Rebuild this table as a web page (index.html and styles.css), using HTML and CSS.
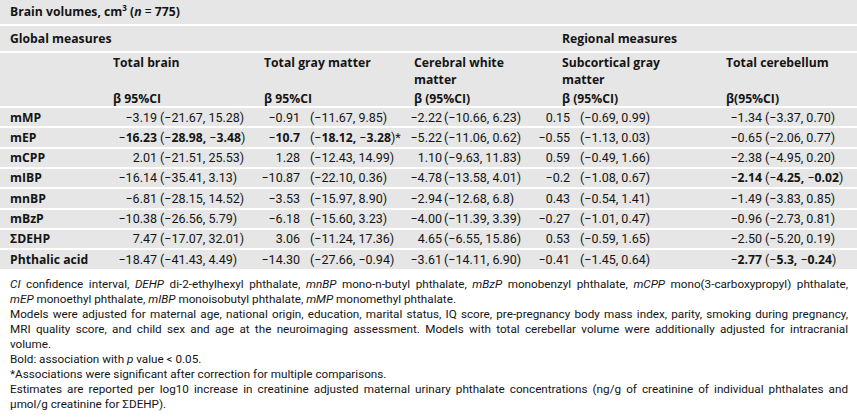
FILE: index.html
```html
<!DOCTYPE html>
<html lang="en">
<head>
<meta charset="utf-8">
<title>Brain volumes</title>
<link rel="stylesheet" href="styles.css">
</head>
<body>
<div class="tbl">
  <div class="row title">Brain volumes, cm<sup class="sup">3</sup> (<i>n</i> <span class="eq">=</span> 775)</div>
  <div class="row groups">
    <div class="gcell">Global measures</div>
    <div class="gcell reg">Regional measures</div>
  </div>
  <div class="row head">
    <div class="hcell"></div>
    <div class="hcell"><div class="hn">Total brain</div><div class="hb">β 95%CI</div></div>
    <div class="hcell"><div class="hn">Total gray matter</div><div class="hb">β 95%CI</div></div>
    <div class="hcell"><div class="hn">Cerebral white<br>matter</div><div class="hb">β (95%CI)</div></div>
    <div class="hcell"><div class="hn">Subcortical gray<br>matter</div><div class="hb">β (95%CI)</div></div>
    <div class="hcell"><div class="hn">Total cerebellum</div><div class="hb">β(95%CI)</div></div>
  </div>

  <div class="row data">
    <div class="lab">mMP</div>
    <div class="est">−3.19</div><div class="ci c1">(−21.67, 15.28)</div>
    <div class="est">−0.91</div><div class="ci c2">(−11.67, 9.85)</div>
    <div class="est">−2.22</div><div class="ci c3">(−10.66, 6.23)</div>
    <div class="est">0.15</div><div class="ci c4">(−0.69, 0.99)</div>
    <div class="est">−1.34</div><div class="ci c5">(−3.37, 0.70)</div>
  </div>
  <div class="row data">
    <div class="lab">mEP</div>
    <div class="est">−<b>16.23</b></div><div class="ci c1">(−<b>28.98,</b> −<b>3.48</b>)</div>
    <div class="est">−<b>10.7</b></div><div class="ci c2">(−<b>18.12,</b> −<b>3.28</b>)*</div>
    <div class="est">−5.22</div><div class="ci c3">(−11.06, 0.62)</div>
    <div class="est">−0.55</div><div class="ci c4">(−1.13, 0.03)</div>
    <div class="est">−0.65</div><div class="ci c5">(−2.06, 0.77)</div>
  </div>
  <div class="row data">
    <div class="lab">mCPP</div>
    <div class="est">2.01</div><div class="ci c1">(−21.51, 25.53)</div>
    <div class="est">1.28</div><div class="ci c2">(−12.43, 14.99)</div>
    <div class="est">1.10</div><div class="ci c3">(−9.63, 11.83)</div>
    <div class="est">0.59</div><div class="ci c4">(−0.49, 1.66)</div>
    <div class="est">−2.38</div><div class="ci c5">(−4.95, 0.20)</div>
  </div>
  <div class="row data">
    <div class="lab">mIBP</div>
    <div class="est">−16.14</div><div class="ci c1">(−35.41, 3.13)</div>
    <div class="est">−10.87</div><div class="ci c2">(−22.10, 0.36)</div>
    <div class="est">−4.78</div><div class="ci c3">(−13.58, 4.01)</div>
    <div class="est">−0.2</div><div class="ci c4">(−1.08, 0.67)</div>
    <div class="est">−<b>2.14</b></div><div class="ci c5">(−<b>4.25,</b> −<b>0.02</b>)</div>
  </div>
  <div class="row data">
    <div class="lab">mnBP</div>
    <div class="est">−6.81</div><div class="ci c1">(−28.15, 14.52)</div>
    <div class="est">−3.53</div><div class="ci c2">(−15.97, 8.90)</div>
    <div class="est">−2.94</div><div class="ci c3">(−12.68, 6.8)</div>
    <div class="est">0.43</div><div class="ci c4">(−0.54, 1.41)</div>
    <div class="est">−1.49</div><div class="ci c5">(−3.83, 0.85)</div>
  </div>
  <div class="row data">
    <div class="lab">mBzP</div>
    <div class="est">−10.38</div><div class="ci c1">(−26.56, 5.79)</div>
    <div class="est">−6.18</div><div class="ci c2">(−15.60, 3.23)</div>
    <div class="est">−4.00</div><div class="ci c3">(−11.39, 3.39)</div>
    <div class="est">−0.27</div><div class="ci c4">(−1.01, 0.47)</div>
    <div class="est">−0.96</div><div class="ci c5">(−2.73, 0.81)</div>
  </div>
  <div class="row data">
    <div class="lab">ΣDEHP</div>
    <div class="est">7.47</div><div class="ci c1">(−17.07, 32.01)</div>
    <div class="est">3.06</div><div class="ci c2">(−11.24, 17.36)</div>
    <div class="est">4.65</div><div class="ci c3">(−6.55, 15.86)</div>
    <div class="est">0.53</div><div class="ci c4">(−0.59, 1.65)</div>
    <div class="est">−2.50</div><div class="ci c5">(−5.20, 0.19)</div>
  </div>
  <div class="row data">
    <div class="lab">Phthalic acid</div>
    <div class="est">−18.47</div><div class="ci c1">(−41.43, 4.49)</div>
    <div class="est">−14.30</div><div class="ci c2">(−27.66, −0.94)</div>
    <div class="est">−3.61</div><div class="ci c3">(−14.11, 6.90)</div>
    <div class="est">−0.41</div><div class="ci c4">(−1.45, 0.64)</div>
    <div class="est">−<b>2.77</b></div><div class="ci c5">(−<b>5.3,</b> −<b>0.24</b>)</div>
  </div>
</div>

<div class="notes">
  <div class="ln just"><i>CI</i> confidence interval, <i>DEHP</i> di-2-ethylhexyl phthalate, <i>mnBP</i> mono-n-butyl phthalate, <i>mBzP</i> monobenzyl phthalate, <i>mCPP</i> mono(3-carboxypropyl) phthalate,</div>
  <div class="ln"><i>mEP</i> monoethyl phthalate, <i>mIBP</i> monoisobutyl phthalate, <i>mMP</i> monomethyl phthalate.</div>
  <div class="ln just">Models were adjusted for maternal age, national origin, education, marital status, IQ score, pre-pregnancy body mass index, parity, smoking during pregnancy,</div>
  <div class="ln just">MRI quality score, and child sex and age at the neuroimaging assessment. Models with total cerebellar volume were additionally adjusted for intracranial</div>
  <div class="ln">volume.</div>
  <div class="ln">Bold: association with <i>p</i> value &lt; 0.05.</div>
  <div class="ln">*Associations were significant after correction for multiple comparisons.</div>
  <div class="ln just">Estimates are reported per log10 increase in creatinine adjusted maternal urinary phthalate concentrations (ng/g of creatinine of individual phthalates and</div>
  <div class="ln">μmol/g creatinine for ΣDEHP).</div>
</div>
</body>
</html>
```

FILE: styles.css
```css
* { box-sizing: border-box; }

body {
  margin: 0;
  background: #ffffff;
  color: #141414;
  font-family: "Roboto", "Open Sans", "Liberation Sans", sans-serif;
  font-size: 12.5px;
}

b,
.title,
.groups,
.head,
.lab {
  font-family: "Open Sans", "Noto Sans", "Liberation Sans", sans-serif;
  font-weight: 700;
  font-size: 12.2px;
}

.tbl {
  width: 857px;
  display: flex;
  flex-direction: column;
  gap: 2px;
  padding-bottom: 2px;
  background: #ffffff;
}

.row {
  background: #e6e6e6;
  white-space: nowrap;
}

.title {
  height: 24px;
  line-height: 24px;
  padding-left: 10px;
}

.sup {
  font-size: 8px;
  line-height: 0;
  vertical-align: 5px;
}

.eq { font-weight: normal; }

.groups {
  height: 25px;
  line-height: 25px;
  display: grid;
  grid-template-columns: 562px 295px;
}

.gcell:first-child { padding-left: 10px; }

.head {
  height: 53px;
  display: grid;
  grid-template-columns: 113px 151px 150px 148px 164px 131px;
  padding-top: 2px;
}

.hcell {
  display: flex;
  flex-direction: column;
  justify-content: space-between;
}

.hn { line-height: 16.5px; }
.hb { line-height: 14px; }

.data {
  height: 18.33px;
  line-height: 16.83px;
  padding-top: 1.5px;
  display: grid;
  grid-template-columns: 107px 50px 93px 50px 92px 50px 78px 50px 142px 50px 95px;
}

.lab { padding-left: 10px; }

.est { text-align: right; }

.c1 { padding-left: 3px; }
.c2 { padding-left: 10px; }
.c3 { padding-left: 2px; }
.c4 { padding-left: 10px; }
.c5 { padding-left: 3px; }

.notes {
  padding: 6px 9px 0 10px;
  line-height: 15px;
  font-size: 11.7px;
}

.ln { white-space: nowrap; }

.just {
  text-align: justify;
  text-align-last: justify;
  white-space: normal;
}
```
